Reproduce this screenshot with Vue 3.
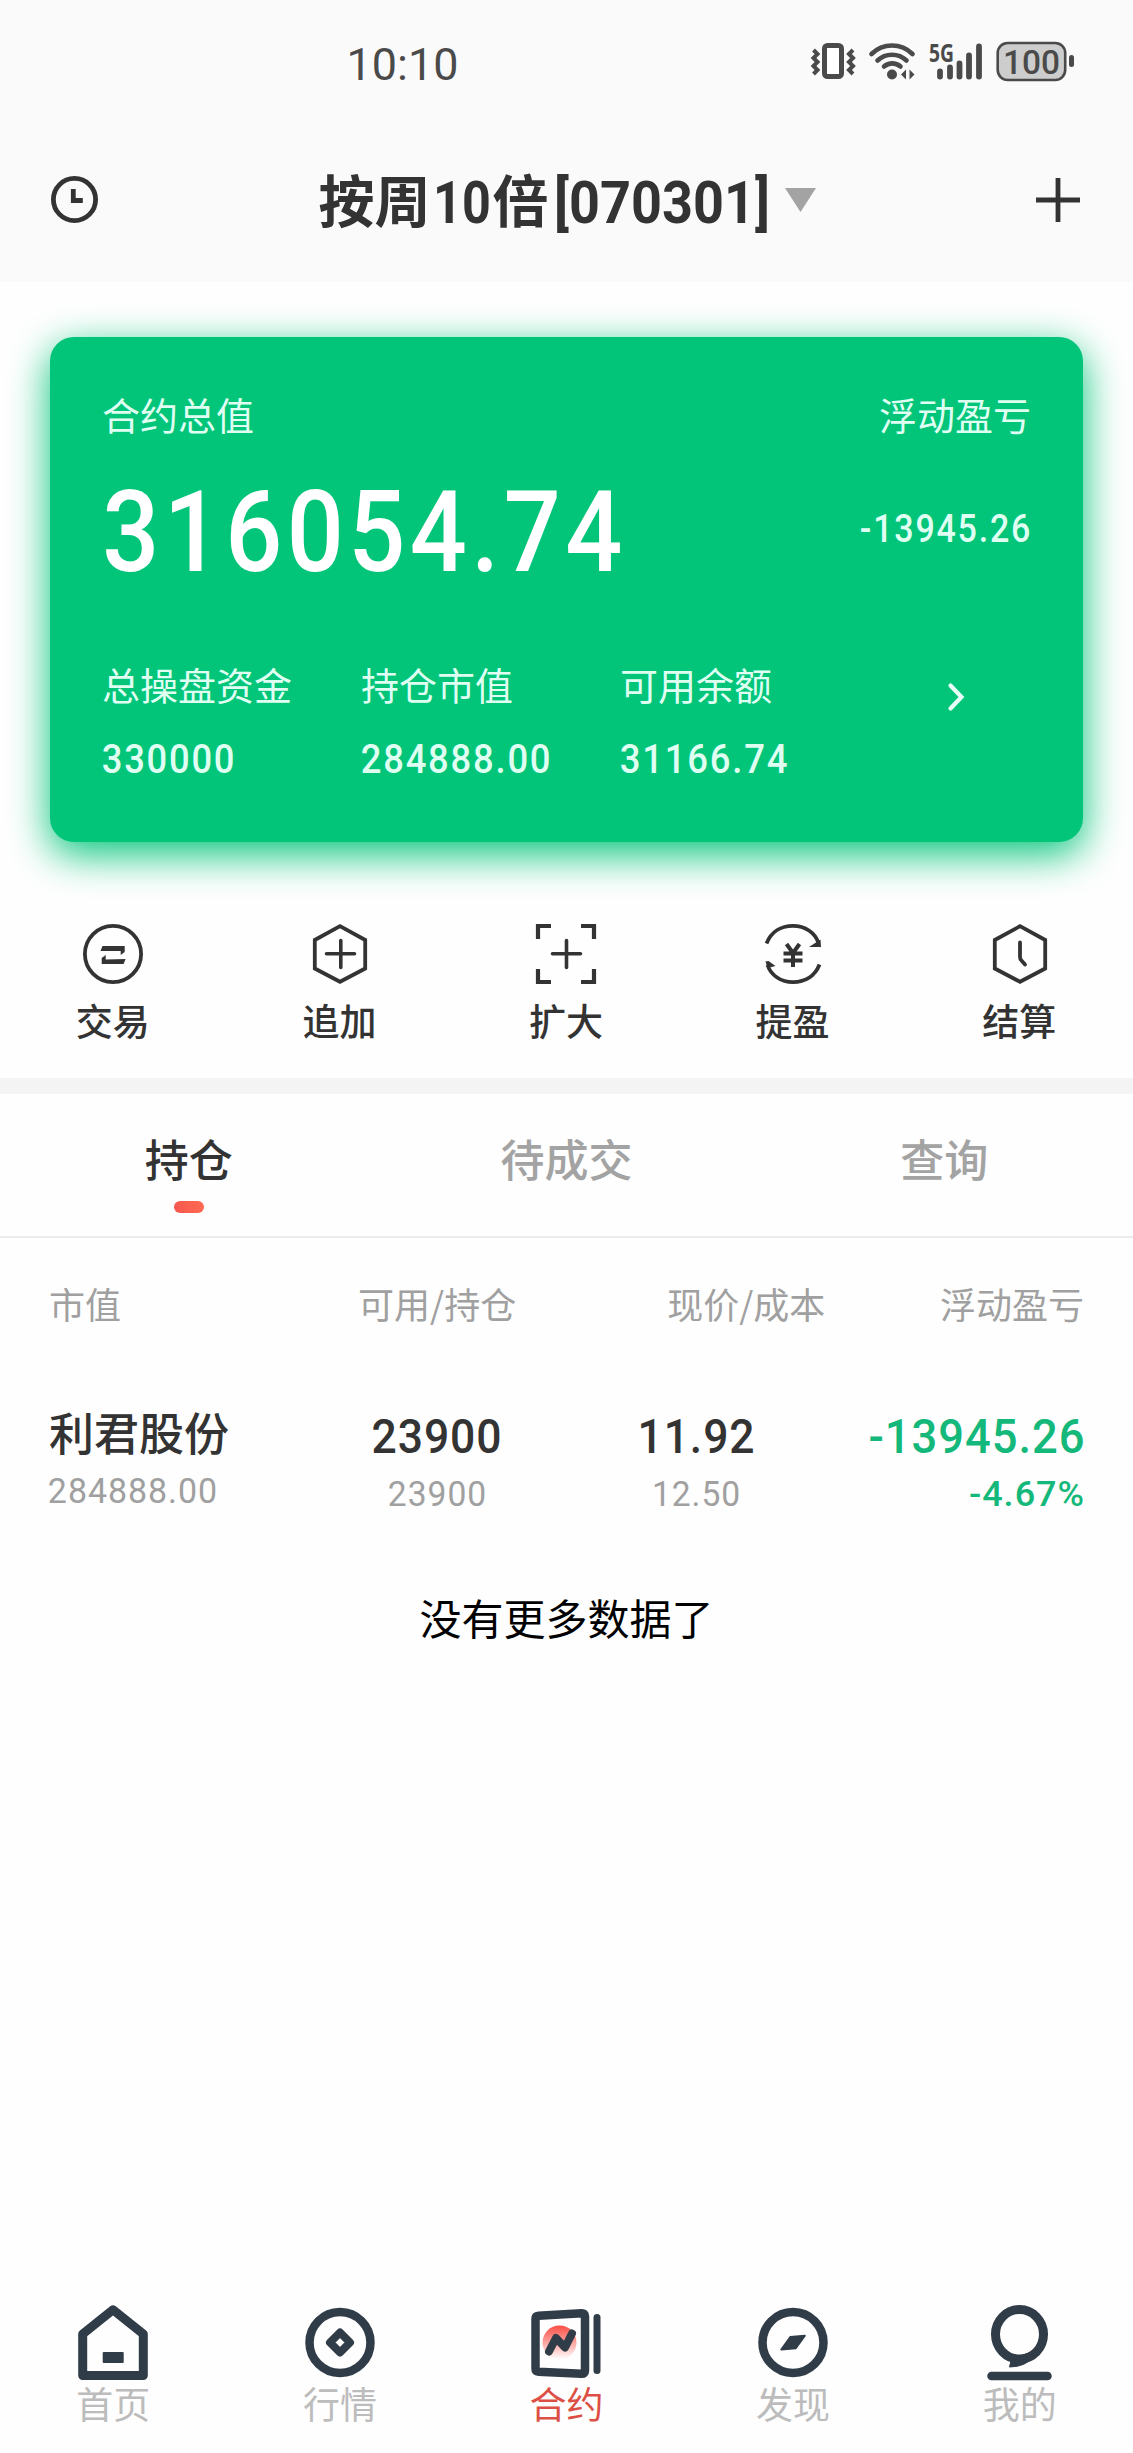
<template>
  <div class="page">
    <div class="status-bar">
      <DinNum class="time" text="10:10" :w="109" :h="31" />
      <svg class="status-icons" width="264" height="42" viewBox="0 0 264 42">
        <g fill="none" stroke="#4a4a4a">
          <rect x="12.5" y="4.5" width="17" height="31" rx="3" stroke-width="5" fill="#fff" />
          <path d="M1.5 9l4 4-4 4 4 4-4 4 4 4-4 4M41 9l-4 4 4 4-4 4 4 4-4 4 4 4" stroke-width="4" />
          <path d="M59.500 13a29 29 0 0 1 41 0M65.500 19.500a21 21 0 0 1 29 0M72 25.500a12.500 12.500 0 0 1 16.500 0" stroke-width="4.600" stroke-linecap="round" />
          <path d="M128 30.500v5M138 26.500v9M147.500 22.500v13M157 14.500v21M167 5.500v30" stroke-width="5.800" stroke-linecap="round" />
          <rect x="185.700" y="2" width="67.500" height="37" rx="10" fill="#cdcdcd" stroke-width="2.600" />
        </g>
        <g fill="#4a4a4a">
          <circle cx="80" cy="33.500" r="5" />
          <path d="M89 33.500l5-5v10zM102.500 33.500l-5-5v10z" />
          <rect x="257" y="14" width="5" height="12" rx="2.500" />
          <text x="117" y="20.500" class="net" textLength="25" lengthAdjust="spacingAndGlyphs">5G</text>
          <text x="191" y="32.500" class="battery" textLength="57" lengthAdjust="spacingAndGlyphs">100</text>
        </g>
      </svg>
    </div>

    <header class="header">
      <svg width="47" height="47" viewBox="0 0 47 47" fill="none" stroke="#333" stroke-width="4.800">
        <circle cx="23.500" cy="23.500" r="21.100" />
        <path d="M22.300 13v11.500h9.500" />
      </svg>
      <div class="title">
        <span>按周</span>
        <DinNum class="title-ten" text="10" :w="54" :h="42" />
        <span>倍</span>
        <DinNum class="title-id" text="[070301]" :w="212" :h="42" />
        <svg class="caret" width="31" height="24" viewBox="0 0 31 24"><path d="M0 0h31L15.500 24z" fill="#a3a3a3" /></svg>
      </div>
      <svg width="44" height="44" viewBox="0 0 44 44" stroke="#333" stroke-width="4.800">
        <path d="M22 0v44M0 22h44" />
      </svg>
    </header>

    <section class="card">
      <div class="card-labels">
        <span>合约总值</span>
        <span>浮动盈亏</span>
      </div>
      <div class="card-main">
        <DinNum class="total" text="316054.74" :w="517" :h="81" :ls="5" />
        <DinNum class="float" text="-13945.26" :w="170" :h="27" :ls="2" />
      </div>
      <div class="card-row">
        <div v-for="item in summary" :key="item.label" class="card-item">
          <span>{{ item.label }}</span>
          <DinNum :text="item.value" :w="item.w" :h="29" :ls="2" />
        </div>
        <svg class="arrow" width="18" height="28" viewBox="0 0 18 28" fill="none" stroke="#e8fff7" stroke-width="4.200">
          <path d="M3.500 2.500l11 11.500-11 11.500" stroke-linecap="round" />
        </svg>
      </div>
    </section>

    <nav class="actions">
      <div v-for="item in actions" :key="item.label" class="action">
        <svg width="60" height="60" viewBox="0 0 60 60" fill="none" stroke="#333" stroke-width="3.800">
          <template v-if="item.icon === 'trade'">
            <circle cx="30" cy="30" r="28.100" />
            <path d="M17.500 27l2-5h22.200v6l-4 3v-4zM42.600 35l-2 5H18.700v-6l4-3v4.500z" fill="#333" stroke="none" />
          </template>
          <template v-else-if="item.icon === 'add'">
            <path d="M30 2.200l25.200 13.800v28.500L30 57.800 4.800 44.500V16z" />
            <path d="M16.500 29.800h28M30.800 16.500v27" stroke-linecap="round" stroke-width="3.600" />
          </template>
          <template v-else-if="item.icon === 'expand'">
            <path d="M2 15V2h13M45 2h13v13M58 45v13H45M15 58H2V45" stroke-width="4.200" />
            <path d="M16.500 29.800h28M30.500 16.500v27" stroke-linecap="round" stroke-width="3.600" />
          </template>
          <template v-else-if="item.icon === 'withdraw'">
            <path d="M3.500 19.500C8 8 18 1.900 30 1.900S52 8.500 55.500 19M56.500 40.500C52 52 42 58.100 30 58.100S8 51.500 4.500 41" />
            <path d="M57.500 15.500l-11.500 7.500h12zM2.500 37.500l2 6.500 8-2-7-5z" fill="#333" stroke="none" />
            <path d="M23.500 20l6.500 9 6.500-9M20.500 29.500h19M20.500 36.500h19M30 28v15" stroke-width="4" />
          </template>
          <template v-else>
            <path d="M30 2.200l25.200 13.800v28.500L30 57.800 4.800 44.500V16z" />
            <path d="M30 18.500v14.500q0 2 1.500 3.500l3.500 4" stroke-linecap="round" />
          </template>
        </svg>
        <span>{{ item.label }}</span>
      </div>
    </nav>

    <nav class="tabs">
      <div v-for="(tab, i) in tabs" :key="tab" class="tab" :class="{ active: activeTab === i }" @click="activeTab = i">
        <span>{{ tab }}</span>
      </div>
    </nav>

    <section class="table">
      <div class="row thead">
        <span>市值</span>
        <span>可用/持仓</span>
        <span>现价/成本</span>
        <span>浮动盈亏</span>
      </div>
      <div class="row tbody">
        <div class="cell first">
          <span class="name">利君股份</span>
          <DinNum class="sub" text="284888.00" :w="168" :h="25" :ls="1" />
        </div>
        <div class="cell">
          <DinNum text="23900" :w="128" :h="34" :ls="1" />
          <DinNum class="sub" text="23900" :w="97" :h="25" :ls="1" />
        </div>
        <div class="cell price">
          <DinNum text="11.92" :w="115" :h="34" :ls="1" />
          <DinNum class="sub" text="12.50" :w="87" :h="25" :ls="1" />
        </div>
        <div class="cell last">
          <DinNum text="-13945.26" :w="214" :h="34" :ls="1" />
          <DinNum class="sub" text="-4.67%" :w="114" :h="25" :ls="1" />
        </div>
      </div>
    </section>
    <p class="no-more">没有更多数据了</p>

    <footer class="tabbar">
      <div v-for="item in menus" :key="item.label" class="menu" :class="{ current: item.icon === 'contract' }">
        <svg width="80" height="80" viewBox="0 0 80 80" fill="none" stroke="#303c48" stroke-width="8.500" stroke-linejoin="round">
          <template v-if="item.icon === 'home'">
            <path d="M40 7.800L70.300 32V73.500H9.700V32z" stroke-width="9" />
            <rect x="29.700" y="50" width="21" height="11" rx="1" fill="#303c48" stroke="none" />
          </template>
          <template v-else-if="item.icon === 'market'">
            <circle cx="40" cy="40.500" r="30.500" />
            <path d="M40 30.500l10 10-10 10-10-10z" stroke-width="8" />
          </template>
          <template v-else-if="item.icon === 'contract'">
            <defs>
              <linearGradient id="sun" x1="0" y1="0" x2="0" y2="1">
                <stop offset="0" stop-color="#fb4f46" />
                <stop offset="0.350" stop-color="#fb8a83" />
                <stop offset="1" stop-color="#fff" />
              </linearGradient>
            </defs>
            <circle cx="33.500" cy="40.500" r="17" fill="url(#sun)" stroke="none" />
            <path d="M12.500 13.800L55.500 11.200Q59 11 59 14.500V68.500Q59 72 55.500 71.800L12.500 69.700Q9.500 69.500 9.500 66.500V17Q9.500 14 12.500 13.800z" />
            <path d="M71 15.500v53" stroke-width="7" stroke-linecap="round" />
            <path d="M23 49.500l7-13.500 9 9.500 7-14" stroke-width="8" stroke-linecap="round" />
          </template>
          <template v-else-if="item.icon === 'find'">
            <circle cx="40" cy="40.500" r="30.500" />
            <path d="M28.300 47.500l9-12.500 14.500-1.300-9 12.500z" fill="#303c48" stroke-width="2" />
          </template>
          <template v-else>
            <ellipse cx="39.500" cy="32.300" rx="24" ry="24.800" stroke-width="9" />
            <path d="M31.500 57l-2 8q16 0 25-11l-6-3z" fill="#303c48" stroke-width="1" />
            <path d="M11.500 74h56" stroke-width="8.500" stroke-linecap="round" />
          </template>
        </svg>
        <span>{{ item.label }}</span>
      </div>
    </footer>
  </div>
</template>

<script setup>
import { ref, h } from 'vue'

// 數字固定寬高，字形壓窄成 DIN 的比例
const DinNum = (props) => {
  const size = props.h / 0.711
  const pad = size * 0.032
  return h('svg', { class: 'din', width: props.w, height: props.h }, [
    h('text', {
      x: -pad,
      y: props.h,
      'font-size': size,
      'letter-spacing': props.ls || 0,
      textLength: props.w + pad * 2,
      lengthAdjust: 'spacingAndGlyphs'
    }, props.text)
  ])
}
DinNum.props = ['text', 'w', 'h', 'ls']

const activeTab = ref(0)
const tabs = ['持仓', '待成交', '查询']

const summary = [
  { label: '总操盘资金', value: '330000', w: 132 },
  { label: '持仓市值', value: '284888.00', w: 189 },
  { label: '可用余额', value: '31166.74', w: 167 }
]

const actions = [
  { label: '交易', icon: 'trade' },
  { label: '追加', icon: 'add' },
  { label: '扩大', icon: 'expand' },
  { label: '提盈', icon: 'withdraw' },
  { label: '结算', icon: 'settle' }
]

const menus = [
  { label: '首页', icon: 'home' },
  { label: '行情', icon: 'market' },
  { label: '合约', icon: 'contract' },
  { label: '发现', icon: 'find' },
  { label: '我的', icon: 'mine' }
]
</script>

<style>
body {
  margin: 0;
  background: #fefefe;
}
</style>

<style scoped>
.page {
  display: flex;
  flex-direction: column;
  width: 1133px;
  height: 2453px;
  color: #333;
  font-family: "Noto Sans CJK SC", sans-serif;
  overflow: hidden;
}

svg {
  display: block;
  flex: none;
  overflow: visible;
}

.din {
  overflow: visible;
  fill: currentColor;
  font-family: Roboto, "Liberation Sans", sans-serif;
  font-weight: 500;
}

.status-bar {
  display: flex;
  flex: none;
  align-items: center;
  justify-content: space-between;
  box-sizing: border-box;
  height: 128px;
  padding: 0 57px 4px 348px;
  background: #fafafa;
  color: #4a4a4a;
}

.time {
  margin-top: 4px;
  font-weight: 400;
}

.net {
  font: 700 25px "Noto Sans", sans-serif;
}

.battery {
  font: 500 34px Roboto, sans-serif;
}

.header {
  display: flex;
  flex: none;
  align-items: center;
  justify-content: space-between;
  box-sizing: border-box;
  height: 154px;
  padding: 0 53px 11px 51px;
  background: #fafafa;
}

.title {
  display: flex;
  align-items: center;
  font-size: 56px;
  font-weight: 700;
  line-height: 80px;
}

.title span {
  margin-top: -4px;
}

.title .din {
  font-weight: 700;
}

.title-ten {
  margin: 4px 4px 0;
}

.title-id {
  margin: 4px 17px 0 7px;
}

.card {
  flex: none;
  box-sizing: border-box;
  height: 505px;
  margin: 55px 50px 0;
  padding: 50px 52px 0;
  border-radius: 24px;
  background: #02c57a;
  box-shadow: 0 12px 40px #02c57a;
  color: #defff2;
  font-size: 38px;
  line-height: 54px;
}

.card-labels,
.card-main {
  display: flex;
  align-items: center;
  justify-content: space-between;
}

.card-main {
  height: 81px;
  margin-top: 49px;
}

.total {
  margin-left: 4px;
  color: #fff;
}

.float {
  margin-top: -5px;
}

.card-row {
  display: flex;
  margin-top: 86px;
}

.card-item {
  width: 259px;
}

.card-item .din {
  margin: 33px 0 0 1px;
}

.arrow {
  margin: 26px 0 0 68px;
}

.actions {
  display: flex;
  flex: none;
  height: 154px;
  margin-top: 82px;
  border-bottom: 16px solid #f4f4f4;
}

.action {
  display: flex;
  flex: 1;
  flex-direction: column;
  align-items: center;
  font-size: 37px;
  font-weight: 500;
  line-height: 50px;
}

.action span {
  margin: 11px 1px 0 0;
}

.tabs {
  display: flex;
  flex: none;
  height: 142px;
  border-bottom: 2px solid #ececec;
}

.tab {
  display: flex;
  flex: 1;
  flex-direction: column;
  align-items: center;
  padding-top: 32px;
  color: #a3a3a3;
  font-size: 44px;
  font-weight: 500;
  line-height: 64px;
}

.tab.active {
  color: #333;
}

.tab.active::after {
  width: 30px;
  height: 12px;
  margin-top: 11px;
  border-radius: 6px;
  background: linear-gradient(90deg, #f5584e, #ff6a53);
  content: "";
}

.table {
  flex: none;
  padding: 0 49px;
}

.row {
  display: grid;
  grid-template-columns: repeat(4, 1fr);
}

.thead {
  margin-top: 40px;
  color: #a0a0a0;
  font-size: 36px;
  line-height: 50px;
}

.thead span {
  text-align: right;
}

.thead span:nth-child(1) {
  text-align: left;
}

.thead span:nth-child(2) {
  text-align: center;
}

.tbody {
  margin-top: 91px;
}

.cell {
  display: flex;
  flex-direction: column;
  align-items: center;
}

.cell .sub {
  margin-top: 28px;
  color: #a0a0a0;
  font-weight: 400;
}

.cell.first {
  align-items: flex-start;
}

.cell.price {
  padding-left: 2px;
}

.name {
  margin-top: -20px;
  font-size: 45px;
  font-weight: 500;
  line-height: 66px;
}

.cell.first .sub {
  margin-top: 13px;
}

.cell.last {
  align-items: flex-end;
  color: #14b87a;
}

.cell.last .sub {
  color: #14b87a;
  font-weight: 500;
}

.no-more {
  margin: 81px 0 0;
  color: #000;
  font-size: 42px;
  line-height: 60px;
  text-align: center;
}

.tabbar {
  display: flex;
  flex: none;
  height: 151px;
  margin-top: auto;
}

.menu {
  display: flex;
  flex: 1;
  flex-direction: column;
  align-items: center;
  color: #bcbcbc;
  font-size: 37px;
  line-height: 50px;
}

.menu span {
  margin-top: -4px;
}

.menu.current {
  color: #dc4f45;
}
</style>
